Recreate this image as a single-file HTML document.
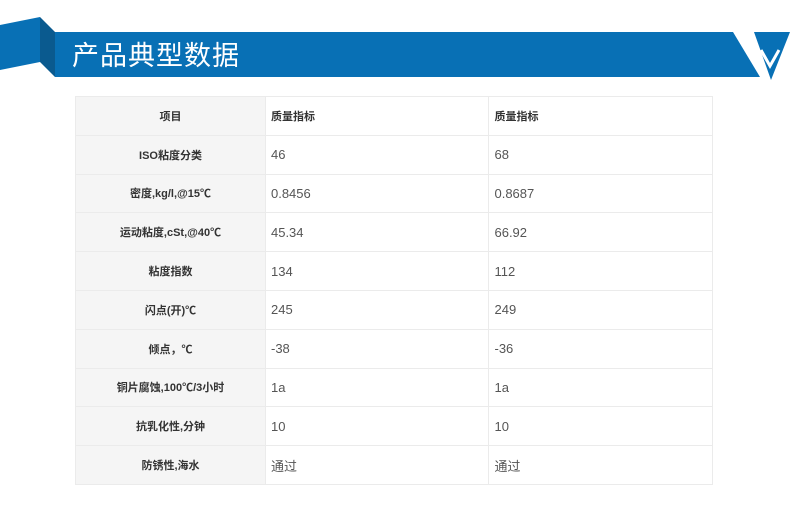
<!DOCTYPE html>
<html><head><meta charset="utf-8"><style>
body{margin:0;width:790px;height:509px;background:#fff;position:relative;overflow:hidden;font-family:"Liberation Sans","Noto Sans CJK SC",sans-serif}
svg.b{position:absolute;left:0;top:0}
.t{position:absolute;left:72px;top:36px;font-size:27px;color:#fff;font-family:"Noto Sans CJK SC",sans-serif;line-height:36px;letter-spacing:1px}
table{position:absolute;left:75px;top:96px;border-collapse:collapse;width:638px}
td{border:1px solid #ebebeb;height:37.8px;padding:0;font-size:13px;color:#555}
td:first-child{background:#f5f5f5;text-align:center;font-weight:bold;color:#333;width:190px;font-size:11px}
td.c{padding-left:5px;width:219px}
tr:first-child td.c{font-weight:bold;color:#333;font-size:11px}
</style></head><body>
<svg class="b" width="790" height="100">
<polygon points="0,25 40,17 40,62 0,70" fill="#0870b5"/>
<polygon points="40,17 55,32 55,77 40,62" fill="#0a5a8f"/>
<polygon points="55,32 733,32 760,77 55,77" fill="#0870b5"/>
<polygon points="754,32 790,32 771,80" fill="#0870b5"/>
<polyline points="761,50 770,66 779,50" fill="none" stroke="#fff" stroke-width="3"/>
</svg>
<div class="t">产品典型数据</div>
<table>
<tr><td>项目</td><td class="c">质量指标</td><td class="c">质量指标</td></tr>
<tr><td>ISO粘度分类</td><td class="c">46</td><td class="c">68</td></tr>
<tr><td>密度,kg/l,@15℃</td><td class="c">0.8456</td><td class="c">0.8687</td></tr>
<tr><td>运动粘度,cSt,@40℃</td><td class="c">45.34</td><td class="c">66.92</td></tr>
<tr><td>粘度指数</td><td class="c">134</td><td class="c">112</td></tr>
<tr><td>闪点(开)℃</td><td class="c">245</td><td class="c">249</td></tr>
<tr><td>倾点，℃</td><td class="c">-38</td><td class="c">-36</td></tr>
<tr><td>铜片腐蚀,100℃/3小时</td><td class="c">1a</td><td class="c">1a</td></tr>
<tr><td>抗乳化性,分钟</td><td class="c">10</td><td class="c">10</td></tr>
<tr><td>防锈性,海水</td><td class="c">通过</td><td class="c">通过</td></tr>
</table>
</body></html>
